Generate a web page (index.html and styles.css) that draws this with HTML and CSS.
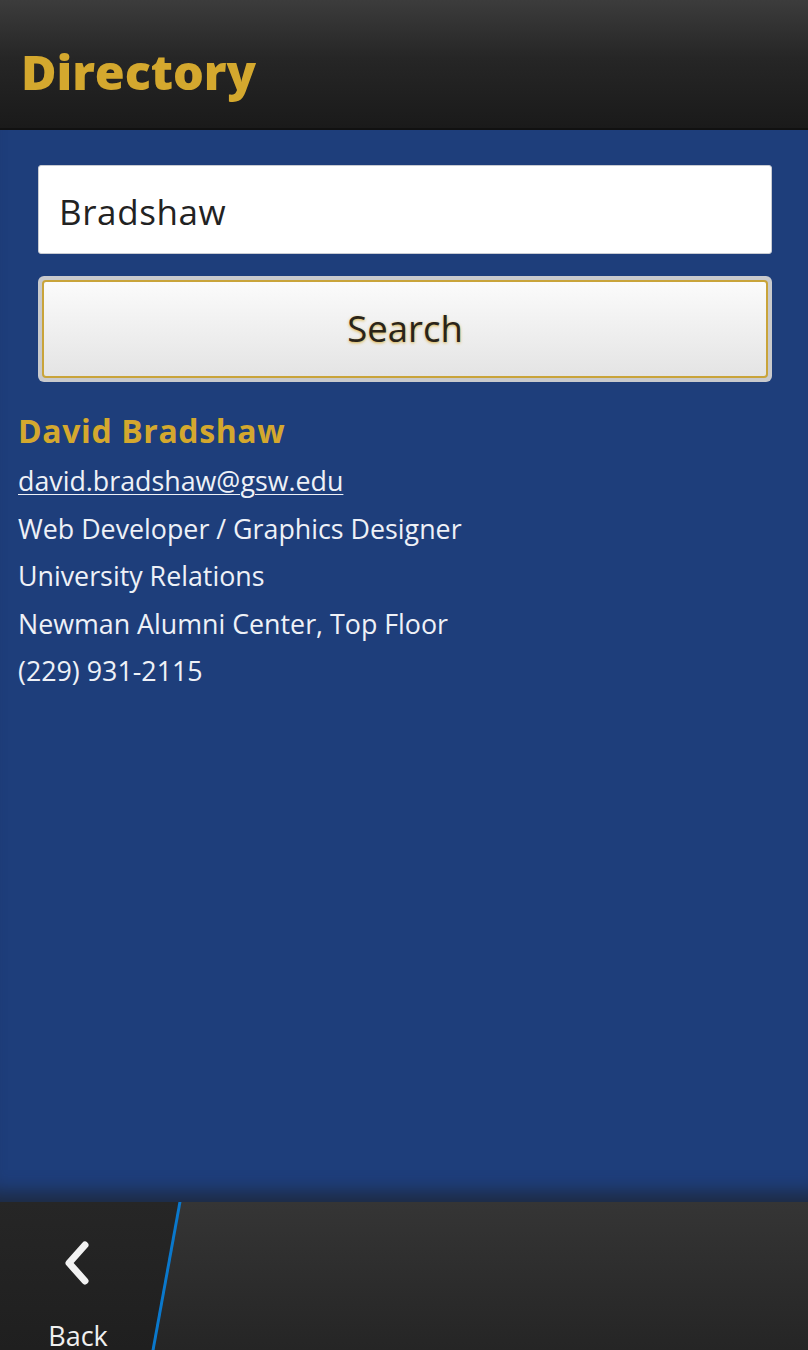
FILE: index.html
```html
<!DOCTYPE html>
<html>
<head>
<meta charset="utf-8">
<link rel="stylesheet" href="styles.css">
</head>
<body>
<div class="app">
  <header class="titlebar">
    <h1 class="title">Directory</h1>
  </header>
  <main class="content">
    <div class="search-field">Bradshaw</div>
    <div class="search-btn-outer">
      <div class="search-btn">Search</div>
    </div>
    <section class="result">
      <div class="name">David Bradshaw</div>
      <div class="line"><a class="email" href="#">david.bradshaw@gsw.edu</a></div>
      <div class="line">Web Developer / Graphics Designer</div>
      <div class="line">University Relations</div>
      <div class="line">Newman Alumni Center, Top Floor</div>
      <div class="line">(229) 931-2115</div>
    </section>
  </main>
  <footer class="actionbar">
    <div class="back">
      <svg class="chev" width="34" height="48" viewBox="0 0 34 48">
        <polyline points="24,6 8,24 24,42" fill="none" stroke="#f2f2f2" stroke-width="7" stroke-linecap="round" stroke-linejoin="round"/>
      </svg>
      <span class="back-label">Back</span>
    </div>
    <div class="divider"></div>
  </footer>
</div>
</body>
</html>
```
FILE: styles.css
```css
* { box-sizing: border-box; }
html, body { margin: 0; padding: 0; }
body {
  width: 808px;
  height: 1350px;
  overflow: hidden;
  font-family: "Open Sans", "Noto Sans", sans-serif;
  background: #1e3e7b;
}
.app {
  display: flex;
  flex-direction: column;
  height: 1350px;
}
.titlebar {
  height: 130px;
  flex: none;
  background: linear-gradient(#3c3c3c 0%, #262626 45%, #1a1a1a 100%);
  border-bottom: 2px solid #111;
  display: flex;
  align-items: center;
  padding-left: 21px;
  padding-top: 14px;
}
.title {
  margin: 0;
  font-family: "Open Sans", sans-serif;
  font-weight: 800;
  font-size: 48.5px;
  color: #d4a82e;
  letter-spacing: -0.1px;
}
.content {
  flex: 1;
  background: #1e3e7b;
  padding: 35px 36px 0 38px;
  display: flex;
  flex-direction: column;
  box-shadow: inset 0 -24px 18px -14px rgba(30,40,60,0.9);
}
.search-field {
  height: 89px;
  background: #fff;
  border: 1px solid #c8cbd2;
  border-radius: 3px;
  font-size: 35px;
  letter-spacing: 0.6px;
  color: #222;
  padding-left: 20px;
  padding-top: 4px;
  display: flex;
  align-items: center;
  line-height: 1;
}
.search-btn-outer {
  margin-top: 22px;
  height: 106px;
  border-radius: 6px;
  background: #c9cacd;
  padding: 4px;
}
.search-btn {
  height: 100%;
  border: 2px solid #c9a43a;
  border-radius: 4px;
  background: linear-gradient(#fbfbfb, #e4e4e4);
  display: flex;
  align-items: center;
  justify-content: center;
  font-size: 36.5px;
  color: #2a2419;
  text-shadow: 0 1px 3px rgba(212,168,46,0.9);
  padding-bottom: 2px;
}
.result {
  margin-left: -20px;
  margin-top: 28px;
  display: flex;
  flex-direction: column;
}
.name {
  font-weight: 700;
  font-size: 32px;
  letter-spacing: 0.6px;
  color: #d4a82e;
  line-height: 42px;
  margin-bottom: 5px;
}
.line {
  font-size: 26.8px;
  color: #eef1f7;
  line-height: 47.5px;
}
.email {
  color: #eef1f7;
  text-decoration: underline;
  text-underline-offset: 3px;
  text-decoration-thickness: 1px;
}
.actionbar {
  height: 148px;
  flex: none;
  position: relative;
  background: linear-gradient(#353535, #252525);
  overflow: hidden;
}
.back {
  width: 182px;
  height: 100%;
  overflow: hidden;
  background: linear-gradient(#262626, #1f1f1f);
  clip-path: polygon(0 0, 180px 0, 153px 100%, 0 100%);
  display: flex;
  flex-direction: column;
  align-items: center;
  padding-top: 37px;
  padding-right: 26px;
}
.chev { display: block; flex: none; }
.back-label {
  flex: none;
  margin-top: 30px;
  font-size: 27px;
  line-height: 37px;
  color: #f0f0f0;
}
.divider {
  position: absolute;
  top: 0;
  left: 165px;
  width: 3px;
  height: 148px;
  background: #0a78cc;
  transform: skewX(-10.3deg);
  transform-origin: center;
}
```
